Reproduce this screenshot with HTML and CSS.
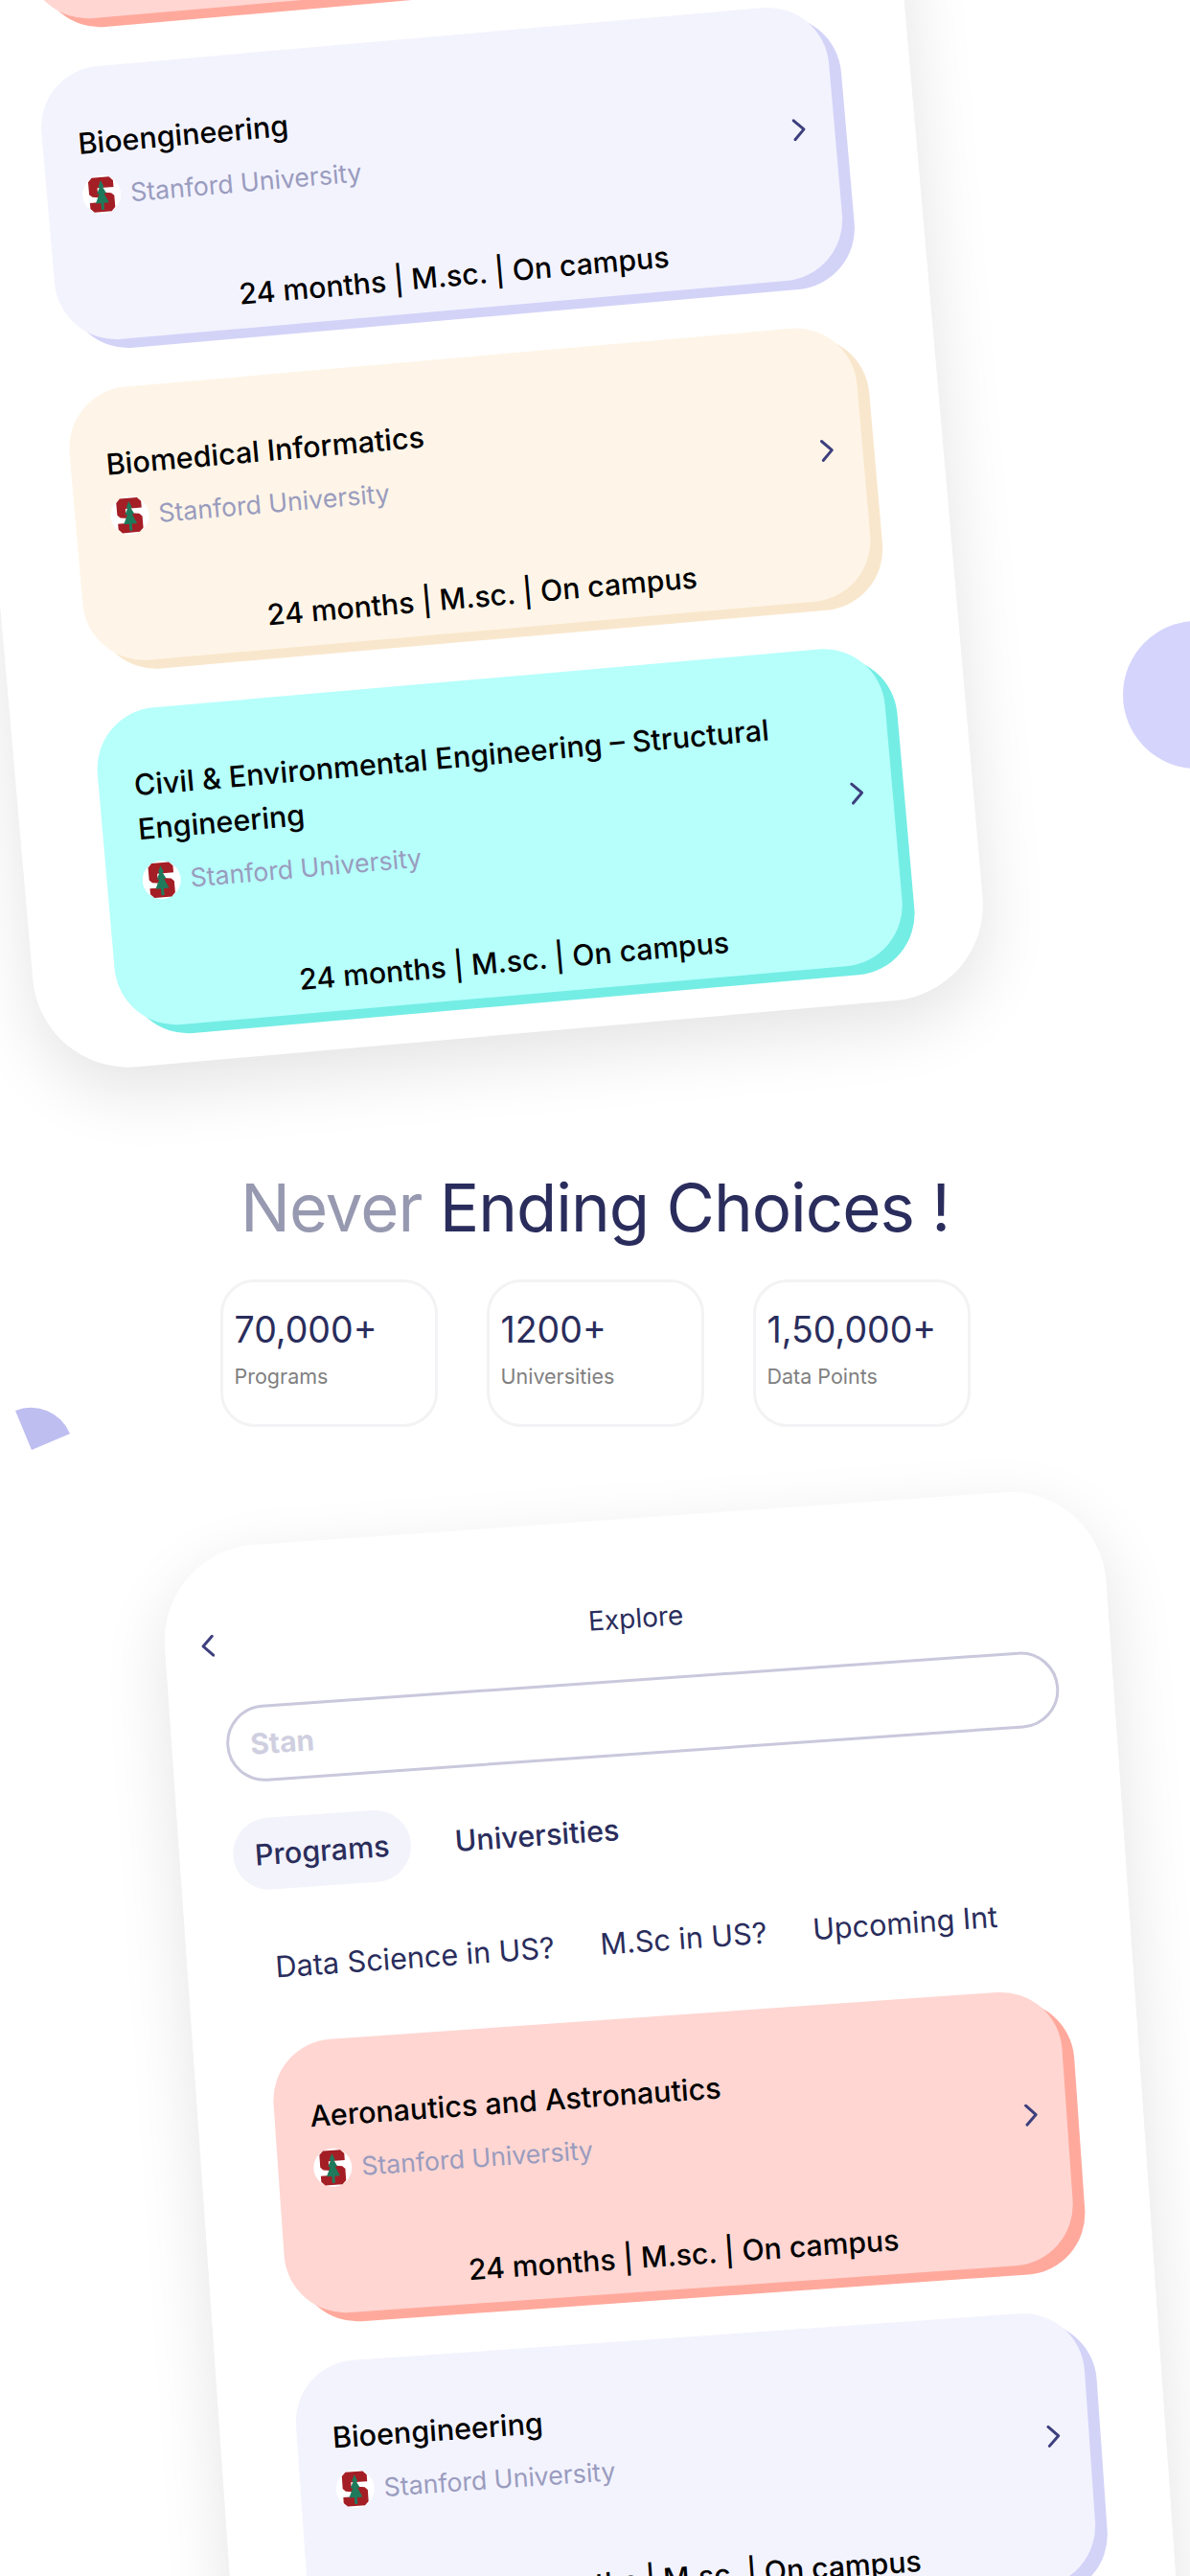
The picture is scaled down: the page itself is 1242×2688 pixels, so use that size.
FILE: index.html
```html
<!DOCTYPE html>
<html lang="en">
<head>
    <meta charset="UTF-8">
    <title>Never Ending Choices</title>
    <link rel="stylesheet" href="styles.css">
</head>
<body>
    <svg width="0" height="0" class="defs">
        <symbol id="stanford" viewBox="0 0 28 38">
            <path fill="#a41e25" d="M5 1H23L27 5V12H10V16L24 18L27 21V33L23 37H5L1 33V27H18V23L4 21L1 18V5Z"/>
            <path fill="#1f7a5c" d="M14 4L17 11H15.500L19 18H16.500L21 28H15.500V35H12.500V28H7L11.500 18H9L12.500 11H11Z"/>
        </symbol>
        <symbol id="chev" viewBox="0 0 14 24">
            <path fill="none" stroke="currentColor" stroke-width="3" stroke-linecap="round" stroke-linejoin="round" d="M2 2L12 12L2 22"/>
        </symbol>
    </svg>

    <div class="page">
        <div class="blob-circle"></div>
        <svg class="blob-wedge" viewBox="0 0 60 46"><path d="M1 4A44 44 0 0 1 58 28L18 45Z"/></svg>

        <div class="phone phone-top">
            <div class="card card-pink card-stub"></div>

            <div class="card card-lilac">
                <div class="card-head">
                    <div class="card-info">
                        <div class="card-title">Bioengineering</div>
                        <div class="uni">
                            <span class="uni-logo"><svg><use href="#stanford"/></svg></span>
                            <span class="uni-name">Stanford University</span>
                        </div>
                    </div>
                    <svg class="chev"><use href="#chev"/></svg>
                </div>
                <div class="card-meta">24 months | M.sc. | On campus</div>
            </div>

            <div class="card card-cream">
                <div class="card-head">
                    <div class="card-info">
                        <div class="card-title">Biomedical Informatics</div>
                        <div class="uni">
                            <span class="uni-logo"><svg><use href="#stanford"/></svg></span>
                            <span class="uni-name">Stanford University</span>
                        </div>
                    </div>
                    <svg class="chev"><use href="#chev"/></svg>
                </div>
                <div class="card-meta">24 months | M.sc. | On campus</div>
            </div>

            <div class="card card-aqua">
                <div class="card-head">
                    <div class="card-info">
                        <div class="card-title">Civil &amp; Environmental Engineering – Structural Engineering</div>
                        <div class="uni">
                            <span class="uni-logo"><svg><use href="#stanford"/></svg></span>
                            <span class="uni-name">Stanford University</span>
                        </div>
                    </div>
                    <svg class="chev"><use href="#chev"/></svg>
                </div>
                <div class="card-meta">24 months | M.sc. | On campus</div>
            </div>
        </div>

        <h1 class="headline"><span class="headline-soft">Never</span> Ending Choices !</h1>

        <div class="stats">
            <div class="stat">
                <div class="stat-num">70,000+</div>
                <div class="stat-label">Programs</div>
            </div>
            <div class="stat">
                <div class="stat-num">1200+</div>
                <div class="stat-label">Universities</div>
            </div>
            <div class="stat">
                <div class="stat-num">1,50,000+</div>
                <div class="stat-label">Data Points</div>
            </div>
        </div>

        <div class="phone phone-bottom">
            <div class="topbar">
                <svg class="back"><use href="#chev"/></svg>
                <span class="topbar-title">Explore</span>
            </div>
            <div class="search">Stan</div>
            <div class="tabs">
                <span class="tab tab-active">Programs</span>
                <span class="tab">Universities</span>
            </div>
            <div class="chips">
                <span>Data Science in US?</span>
                <span>M.Sc in US?</span>
                <span>Upcoming Int</span>
            </div>

            <div class="card card-pink">
                <div class="card-head">
                    <div class="card-info">
                        <div class="card-title">Aeronautics and Astronautics</div>
                        <div class="uni">
                            <span class="uni-logo"><svg><use href="#stanford"/></svg></span>
                            <span class="uni-name">Stanford University</span>
                        </div>
                    </div>
                    <svg class="chev"><use href="#chev"/></svg>
                </div>
                <div class="card-meta">24 months | M.sc. | On campus</div>
            </div>

            <div class="card card-lilac">
                <div class="card-head">
                    <div class="card-info">
                        <div class="card-title">Bioengineering</div>
                        <div class="uni">
                            <span class="uni-logo"><svg><use href="#stanford"/></svg></span>
                            <span class="uni-name">Stanford University</span>
                        </div>
                    </div>
                    <svg class="chev"><use href="#chev"/></svg>
                </div>
                <div class="card-meta">24 months | M.sc. | On campus</div>
            </div>
        </div>
    </div>
</body>
</html>
```

FILE: styles.css
```css
* {
    box-sizing: border-box;
    margin: 0;
    padding: 0;
}

html,
body {
    width: 1242px;
    height: 2688px;
    overflow: hidden;
    background: #fff;
}

body {
    font-family: Inter, "Liberation Sans", sans-serif;
    color: #2a2d5c;
}

.defs {
    position: absolute;
}

.page {
    position: relative;
    width: 1242px;
    height: 2688px;
    overflow: hidden;
}

/* background shapes */
.blob-circle {
    position: absolute;
    left: 1172px;
    top: 648px;
    width: 154px;
    height: 154px;
    border-radius: 50%;
    background: #d4d4fd;
}

.blob-wedge {
    position: absolute;
    left: 15px;
    top: 1468px;
    width: 60px;
    height: 46px;
    fill: #bebef0;
}

/* tilted phone panels */
.phone {
    background: #fff;
    border-radius: 100px;
    box-shadow: 0 24px 70px rgba(0, 0, 0, 0.11);
    display: flex;
    flex-direction: column;
}

.phone-top {
    width: 995px;
    height: 1300px;
    margin-top: -178px;
    margin-left: 43px;
    padding: 0 0 40px 86px;
    justify-content: flex-end;
    gap: 50px;
    transform: rotate(-5deg);
    transform-origin: 0 100%;
}

.phone-bottom {
    width: 985px;
    height: 1400px;
    margin-left: 165px;
    margin-top: 130px;
    padding: 0 0 0 80px;
    transform: rotate(-4deg);
    transform-origin: 0 0;
}

/* cards */
.card {
    flex: none;
    width: 825px;
    border-radius: 64px;
    padding: 56px 30px 16px 37px;
    display: flex;
    flex-direction: column;
}

.card-stub {
    height: 286px;
}

.card-pink {
    background: #ffd6d2;
    box-shadow: 12px 10px 0 #ffa99c;
}

.card-lilac {
    background: #f3f3fe;
    box-shadow: 12px 10px 0 #d3d3f8;
}

.card-cream {
    background: #fef5e8;
    box-shadow: 12px 10px 0 #f9e7cd;
}

.card-aqua {
    background: #b6fffb;
    box-shadow: 12px 10px 0 #74ede5;
}

.card-head {
    display: flex;
    align-items: center;
    gap: 20px;
}

.card-info {
    flex: 1;
    min-width: 0;
}

.card-title {
    max-width: 700px;
    font-size: 30.5px;
    font-weight: 500;
    line-height: 46px;
    color: #000;
}

.uni {
    display: flex;
    align-items: center;
    gap: 10px;
    margin-top: 12px;
}

.uni-logo {
    flex: none;
    width: 40px;
    height: 40px;
    border-radius: 50%;
    background: #fff;
    display: flex;
    align-items: center;
    justify-content: center;
}

.uni-logo svg {
    width: 28px;
    height: 38px;
}

.uni-name {
    font-size: 26.7px;
    color: #9a9cbe;
}

.chev {
    flex: none;
    width: 14px;
    height: 24px;
    margin-top: 50px;
    color: #3d3f7d;
}

.card-meta {
    margin-top: 76px;
    text-align: center;
    font-size: 30.2px;
    font-weight: 500;
    line-height: 40px;
    color: #000;
}

/* middle block */
.headline {
    margin-top: 98px;
    text-align: center;
    font-size: 69px;
    font-weight: 400;
    line-height: 80px;
    letter-spacing: -1px;
}

.headline-soft {
    color: #9799b0;
}

.stats {
    display: flex;
    justify-content: center;
    gap: 51px;
    margin-top: 35px;
}

.stat {
    width: 227px;
    height: 154px;
    border: 3px solid #f3f3f5;
    border-radius: 36px;
    padding: 27px 0 0 12px;
}

.stat-num {
    font-size: 37.5px;
    line-height: 46px;
}

.stat-label {
    margin-top: 11px;
    font-size: 21.5px;
    line-height: 28px;
    color: #808080;
}

/* explore screen */
.topbar {
    position: relative;
    margin-left: -80px;
    height: 40px;
    margin-top: 84px;
    display: flex;
    align-items: center;
    justify-content: center;
}

.topbar-title {
    font-size: 28px;
}

.back {
    position: absolute;
    left: 38px;
    top: 6px;
    width: 14px;
    height: 24px;
    transform: scaleX(-1);
    color: #3d3f7d;
}

.search {
    width: 871px;
    height: 80px;
    margin-top: 43px;
    margin-left: -23px;
    padding-left: 22px;
    border: 3px solid #c9c8dc;
    border-radius: 40px;
    font-size: 30px;
    font-weight: 700;
    line-height: 74px;
    color: #cfcfe0;
}

.tabs {
    display: flex;
    align-items: center;
    gap: 46px;
    margin-top: 38px;
    margin-left: -24px;
}

.tab {
    font-size: 30.5px;
    font-weight: 500;
}

.tab-active {
    width: 186px;
    height: 75px;
    border-radius: 38px;
    background: #f3f3fb;
    line-height: 75px;
    text-align: center;
}

.chips {
    display: flex;
    gap: 48px;
    margin-top: 63px;
    margin-left: 12px;
    font-size: 30.6px;
    line-height: 36px;
    white-space: nowrap;
}

.phone-bottom .card {
    margin-top: 61px;
}

.phone-bottom .card + .card {
    margin-top: 50px;
}
```
